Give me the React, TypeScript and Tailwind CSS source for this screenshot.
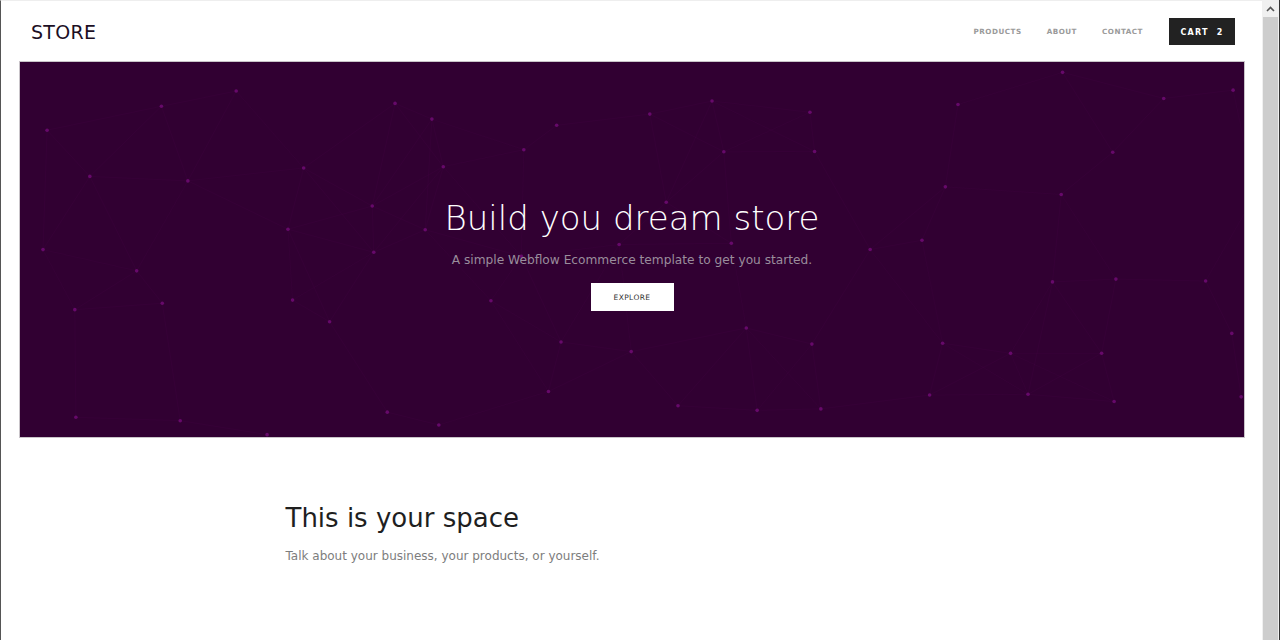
import React from 'react';

// deterministic pseudo random so the particle field is stable
const rand = (seed: number) => {
  const x = Math.sin(seed * 9301 + 49297) * 233280;
  return x - Math.floor(x);
};

const W = 1225;
const H = 376;

const dots: { x: number; y: number }[] = [];
for (let row = 0; row < 5; row++) {
  for (let col = 0; col < 13; col++) {
    const i = row * 13 + col;
    dots.push({
      x: col * 96 + 20 + rand(i + 1) * 76,
      y: row * 76 + 10 + rand(i + 101) * 60,
    });
  }
}

const links: [number, number][] = [];
dots.forEach((a, i) => {
  dots.forEach((b, j) => {
    if (j <= i) return;
    const d = Math.hypot(a.x - b.x, a.y - b.y);
    if (d < 120) links.push([i, j]);
  });
});

const Particles: React.FC = () => (
  <svg className="absolute inset-0 h-full w-full" viewBox={`0 0 ${W} ${H}`} preserveAspectRatio="none">
    {links.map(([i, j]) => (
      <line
        key={`${i}-${j}`}
        x1={dots[i].x}
        y1={dots[i].y}
        x2={dots[j].x}
        y2={dots[j].y}
        stroke="#6a1068"
        strokeOpacity={0.09}
        strokeWidth={1}
      />
    ))}
    {dots.map((d, i) => (
      <circle key={i} cx={d.x} cy={d.y} r={1.8} fill="#66096a" />
    ))}
  </svg>
);

const font = { fontFamily: '"DejaVu Sans", "Noto Sans", sans-serif' };

export default function App() {
  return (
    <div className="flex h-[640px] w-[1280px] overflow-hidden bg-white" style={font}>
      {/* page area */}
      <div className="flex-1 border-l border-t border-l-[#555555] border-t-[#eeeeee] bg-white">
        <header className="flex h-[60px] items-center justify-between pl-[30px] pr-[27px]">
          <div className="pt-[2px] text-[19px] tracking-[0.3px] text-[#1c0f24]">STORE</div>
          <nav className="flex items-center pt-[1px]">
            <a className="mr-[25px] pt-[2px] text-[7.2px] font-semibold tracking-[0.5px] text-[#9a9a9a]">PRODUCTS</a>
            <a className="mr-[25px] pt-[2px] text-[7.2px] font-semibold tracking-[0.5px] text-[#9a9a9a]">ABOUT</a>
            <a className="mr-[26px] pt-[2px] text-[7.2px] font-semibold tracking-[0.5px] text-[#9a9a9a]">CONTACT</a>
            <button className="flex h-[27px] w-[66px] items-center justify-center bg-[#222222] pt-[2px] text-[8px] font-bold tracking-[1.2px] text-white">
              CART<span className="ml-[8px]">2</span>
            </button>
          </nav>
        </header>

        <section className="relative ml-[18px] mr-[17px] flex h-[377px] flex-col items-center justify-center overflow-hidden border border-[#c9c4c9] bg-[#310032]">
          <Particles />
          <div className="relative flex flex-col items-center pt-[10px]">
            <h1 className="text-[34px] font-light leading-[40px] text-white">Build you dream store</h1>
            <p className="mt-[13px] text-[12.2px] text-[#9a8d9c]">
              A simple Webflow Ecommerce template to get you started.
            </p>
            <button className="mt-[14px] h-[28px] w-[83px] bg-white text-[7.5px] tracking-[0.4px] text-[#333333]">
              EXPLORE
            </button>
          </div>
        </section>

        <section className="mx-auto w-[692px] pt-[63px]">
          <h2 className="text-[26px] leading-[34px] text-[#1f1f1f]">This is your space</h2>
          <p className="mt-[12px] text-[12px] text-[#7d7d7d]">Talk about your business, your products, or yourself.</p>
        </section>
      </div>

      {/* scrollbar */}
      <div className="flex w-[18px] flex-col border-r border-[#333333] bg-[#f0f0f0]">
        <div className="flex h-[17px] items-center justify-center">
          <svg width="9" height="6" viewBox="0 0 9 6">
            <path d="M1 5 L4.5 1.5 L8 5" fill="none" stroke="#555555" strokeWidth="1.6" />
          </svg>
        </div>
        <div className="mx-[1px] flex-1 bg-[#cdcdcd]" />
      </div>
    </div>
  );
}
